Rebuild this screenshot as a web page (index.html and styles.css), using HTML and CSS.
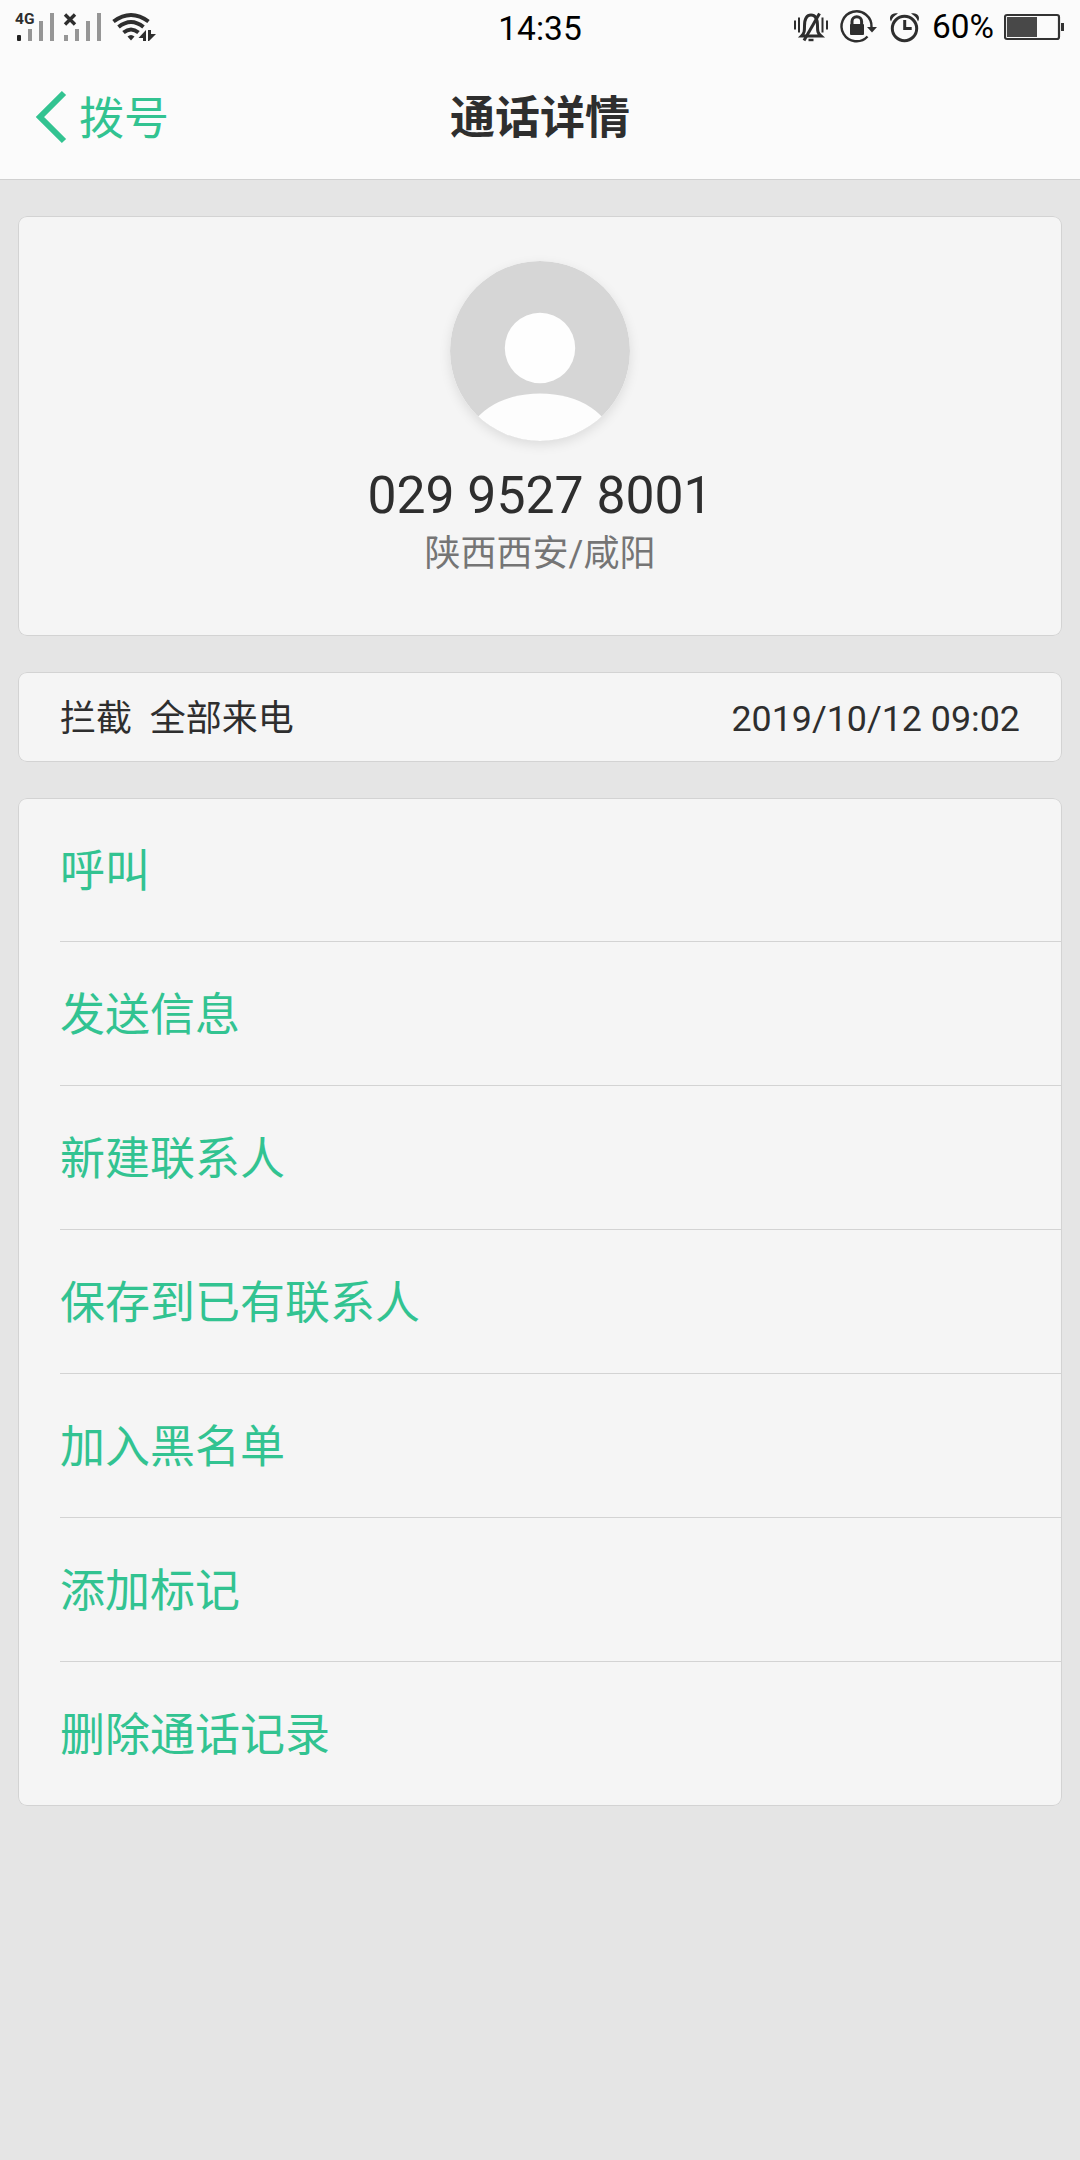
FILE: index.html
```html
<!DOCTYPE html>
<html lang="zh-CN">
<head>
    <meta charset="UTF-8">
    <meta name="viewport" content="width=device-width, initial-scale=1.0">
    <title>通话详情</title>
    <link rel="stylesheet" href="styles.css">
</head>
<body>
    <header class="header">
        <div class="status-bar">
            <div class="status-left">
                <!-- SIM 1, SIM 2, wifi -->
                <svg width="160" height="56" viewBox="0 0 160 56">
                    <text class="network" x="15" y="24">4G</text>
                    <rect x="17" y="35" width="4" height="6" rx="1" fill="#222"/>
                    <g fill="#969696">
                        <rect x="28" y="29" width="4" height="12"/>
                        <rect x="39" y="21" width="4" height="20"/>
                        <rect x="50" y="13" width="4" height="28"/>
                        <rect x="64" y="35" width="4" height="6"/>
                        <rect x="75" y="29" width="4" height="12"/>
                        <rect x="86" y="21" width="4" height="20"/>
                        <rect x="97" y="13" width="4" height="28"/>
                    </g>
                    <path d="M65 14.500l10 10M75 14.500l-10 10" stroke="#2e2e2e" stroke-width="3.400" fill="none"/>
                    <g stroke="#2e2e2e" stroke-width="4" fill="none">
                        <path d="M113.500 21.500Q131 8.500 148.500 21.500"/>
                        <path d="M118.500 27Q131 17 143.500 27"/>
                        <path d="M123.500 32.500Q131 26.500 138.500 32.500"/>
                    </g>
                    <path d="M127.500 36.500Q131 33.500 134.500 36.500L131 40.500z" fill="#2e2e2e"/>
                    <path d="M138.500 38l7.500-8v11h-3v-3zM148 41V30h3v4h5l-7 7z" fill="#2e2e2e"/>
                </svg>
            </div>
            <div class="status-time">14:35</div>
            <div class="status-right">
                <!-- silent, rotation lock, alarm -->
                <svg width="136" height="56" viewBox="790 0 136 56">
                    <g stroke="#2e2e2e" fill="none">
                        <path d="M795 20.500v9M799 17.500v15M822.500 17.500v15M827 20.500v9" stroke-width="2"/>
                        <path d="M801.500 36c3-3 3-5 3-10 0-7 2.500-11 6.500-11s6.500 4 6.500 11c0 5 0 7 3.500 10z" stroke-width="3"/>
                        <path d="M804 40.500L819.500 13.500" stroke-width="3"/>
                        <path d="M808.500 40h5" stroke-width="2.400"/>
                        <path d="M867.500 36.500A15 15 0 1 1 871.500 27" stroke-width="2.400"/>
                        <path d="M852 27v-5.500a4.800 4.800 0 0 1 9.600 0V27" stroke-width="3"/>
                        <circle cx="904.500" cy="28.500" r="12.200" stroke-width="3"/>
                        <path d="M904.700 20v8.500h7" stroke-width="3"/>
                    </g>
                    <g fill="#2e2e2e">
                        <rect x="850" y="24" width="14" height="11" rx="1"/>
                        <path d="M867 27h10l-5 5.500z"/>
                        <path d="M891 21.500c-3-5 1-9.500 7-8q-5.500 3-7 8zM918 21.500c3-5-1-9.500-7-8q5.500 3 7 8z"/>
                    </g>
                </svg>
                <span class="battery-text">60%</span>
                <svg width="62" height="56" viewBox="1004 0 62 56">
                    <rect x="1005" y="15" width="54" height="24" rx="2" fill="none" stroke="#333" stroke-width="2.200"/>
                    <rect x="1007" y="17" width="30" height="20" fill="#484848"/>
                    <rect x="1061" y="23" width="3" height="8" fill="#333"/>
                </svg>
            </div>
        </div>
        <div class="nav-bar">
            <a class="back">
                <svg width="34" height="56" viewBox="0 0 34 56">
                    <path d="M31 3L7 27l24 24" fill="none" stroke="#32c391" stroke-width="6"/>
                </svg>
                <span class="back-text">拨号</span>
            </a>
            <h1 class="title">通话详情</h1>
        </div>
    </header>

    <main class="content">
        <section class="card contact">
            <svg class="avatar" width="180" height="180" viewBox="0 0 180 180">
                <defs>
                    <clipPath id="avatarClip"><circle cx="90" cy="90" r="90"/></clipPath>
                </defs>
                <circle cx="90" cy="90" r="90" fill="#d6d6d6"/>
                <circle cx="90" cy="87" r="35.200" fill="#fefefe"/>
                <ellipse cx="90" cy="180" rx="72" ry="47.500" fill="#fdfdfd" clip-path="url(#avatarClip)"/>
            </svg>
            <div class="number">029 9527 8001</div>
            <div class="location">陕西西安/咸阳</div>
        </section>

        <section class="card record">
            <span class="record-type">拦截  全部来电</span>
            <span class="record-date">2019/10/12 09:02</span>
        </section>

        <ul class="card actions">
            <li>呼叫</li>
            <li>发送信息</li>
            <li>新建联系人</li>
            <li>保存到已有联系人</li>
            <li>加入黑名单</li>
            <li>添加标记</li>
            <li>删除通话记录</li>
        </ul>
    </main>
</body>
</html>
```
FILE: styles.css
```css
* {
    box-sizing: border-box;
}
body {
    margin: 0;
    min-height: 2160px;
    background-color: #e5e5e5;
    color: #2e2e2e;
    font-family: Roboto, "Noto Sans CJK SC", sans-serif;
}
svg {
    display: block;
    flex-shrink: 0;
}
.header {
    height: 180px;
    background-color: #fbfbfb;
    border-bottom: 1px solid #d0d0d0;
}
.status-bar {
    display: grid;
    grid-template-columns: 1fr auto 1fr;
    height: 56px;
    color: #000;
}
.network {
    font-size: 15.5px;
    font-weight: bold;
    fill: #2e2e2e;
}
.status-time {
    font-size: 33.5px;
    line-height: 57px;
}
.status-right {
    display: flex;
    justify-content: flex-end;
    padding-right: 14px;
}
.battery-text {
    width: 78px;
    padding-left: 6px;
    font-size: 33.4px;
    line-height: 54px;
}
.nav-bar {
    display: grid;
    grid-template-columns: 1fr auto 1fr;
    align-items: center;
    height: 123px;
    padding: 0 33px;
    font-size: 45px;
    line-height: 66px;
}
.back {
    display: flex;
    align-items: center;
    gap: 12px;
    color: #32c391;
}
.back-text {
    padding-top: 5px;
}
.title {
    margin: 0;
    padding-top: 3px;
    font-size: 45px;
    font-weight: bold;
}
.content {
    display: flex;
    flex-direction: column;
    gap: 36px;
    padding: 36px 18px;
}
.card {
    background-color: #f5f5f5;
    border-radius: 9px;
    box-shadow: inset 0 0 0 1px #d3d3d3;
}
.contact {
    display: flex;
    flex-direction: column;
    align-items: center;
    height: 420px;
    padding-top: 44.5px;
}
.avatar {
    border-radius: 50%;
    box-shadow: 0 4px 12px rgba(0,0,0,0.1);
}
.number {
    margin-top: 25.5px;
    font-size: 51.7px;
    line-height: 60px;
}
.location {
    margin-top: 1px;
    color: #757575;
    font-size: 36px;
    line-height: 54px;
}
.record {
    display: flex;
    justify-content: space-between;
    align-items: center;
    height: 90px;
    padding: 0 42px;
    font-size: 36px;
}
.record-type {
    padding-bottom: 4px;
    white-space: pre;
}
.record-date {
    padding-top: 3px;
    font-size: 35.8px;
}
.actions {
    margin: 0;
    padding: 0 0 0 42px;
    list-style-type: none;
    color: #32c391;
    font-size: 45px;
}
.actions li {
    height: 144px;
    padding-top: 3px;
    line-height: 142px;
    border-bottom: 1px solid #d3d3d3;
}
.actions li:last-child {
    border-bottom: none;
}
```
